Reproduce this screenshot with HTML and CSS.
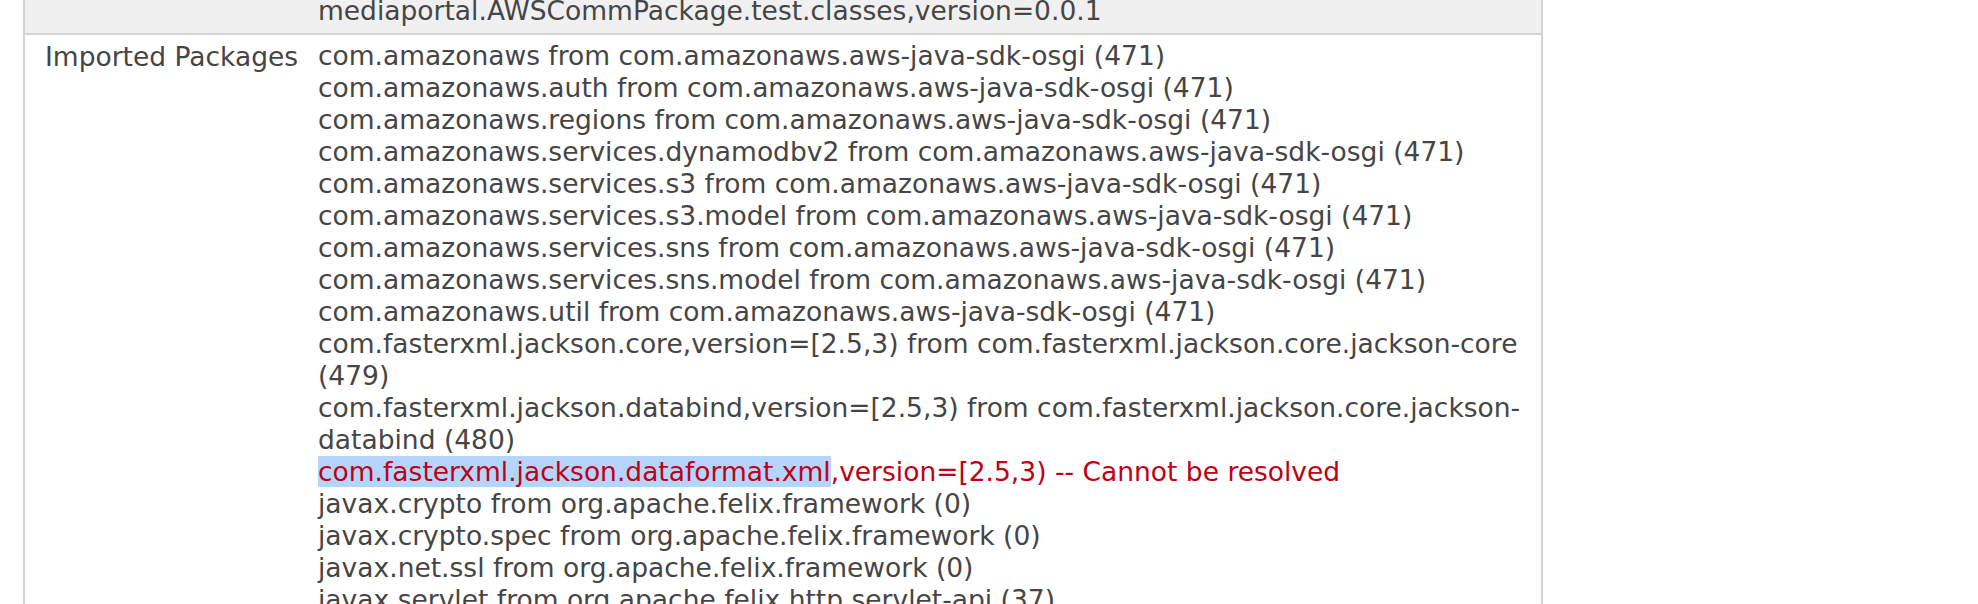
FILE: index.html
```html
<!DOCTYPE html>
<html>
<head>
<meta charset="utf-8">
<title>Bundle details</title>
<link rel="stylesheet" href="styles.css">
</head>
<body>
<div class="details">
  <div class="row row-alt">
    <div class="label"></div>
    <div class="value">mediaportal.AWSCommPackage.test.classes,version=0.0.1</div>
  </div>
  <div class="row">
    <div class="label">Imported Packages</div>
    <div class="value">com.amazonaws from com.amazonaws.aws-java-sdk-osgi (471)<br>com.amazonaws.auth from com.amazonaws.aws-java-sdk-osgi (471)<br>com.amazonaws.regions from com.amazonaws.aws-java-sdk-osgi (471)<br>com.amazonaws.services.dynamodbv2 from com.amazonaws.aws-java-sdk-osgi (471)<br>com.amazonaws.services.s3 from com.amazonaws.aws-java-sdk-osgi (471)<br>com.amazonaws.services.s3.model from com.amazonaws.aws-java-sdk-osgi (471)<br>com.amazonaws.services.sns from com.amazonaws.aws-java-sdk-osgi (471)<br>com.amazonaws.services.sns.model from com.amazonaws.aws-java-sdk-osgi (471)<br>com.amazonaws.util from com.amazonaws.aws-java-sdk-osgi (471)<br>com.fasterxml.jackson.core,version=[2.5,3) from com.fasterxml.jackson.core.jackson-core (479)<br>com.fasterxml.jackson.databind,version=[2.5,3) from com.fasterxml.jackson.core.jackson-databind (480)<br><span class="error"><span class="selected">com.fasterxml.jackson.dataformat.xml</span>,version=[2.5,3) -- Cannot be resolved</span><br>javax.crypto from org.apache.felix.framework (0)<br>javax.crypto.spec from org.apache.felix.framework (0)<br>javax.net.ssl from org.apache.felix.framework (0)<br>javax.servlet from org.apache.felix.http.servlet-api (37)<br>javax.servlet.http from org.apache.felix.http.servlet-api (37)<br>javax.xml.stream from org.apache.felix.framework (0)</div>
  </div>
</div>
</body>
</html>
```

FILE: styles.css
```css
html, body {
  margin: 0;
  padding: 0;
  background: #ffffff;
}

body {
  font-family: "DejaVu Sans", Verdana, sans-serif;
  font-size: 26.5px;
  line-height: 32px;
  color: #454545;
  overflow: hidden;
}

.details {
  width: 1520px;
  margin: -10px 0 0 23px;
  box-sizing: border-box;
  border-left: 2px solid #d4d4d4;
  border-right: 2px solid #d4d4d4;
}

.row {
  display: grid;
  grid-template-columns: 293px 1fr;
}

.row-alt {
  background: #f0f0f0;
  border-bottom: 2px solid #d4d4d4;
}

.label {
  padding: 6px 0 6px 20px;
  white-space: nowrap;
}

.row-alt .value {
  padding: 6px 12px 6px 0;
}

.row .value {
  padding: 5px 12px 6px 0;
}

.error {
  color: #c00014;
}

.selected {
  background: #b4d5fe;
}
```
